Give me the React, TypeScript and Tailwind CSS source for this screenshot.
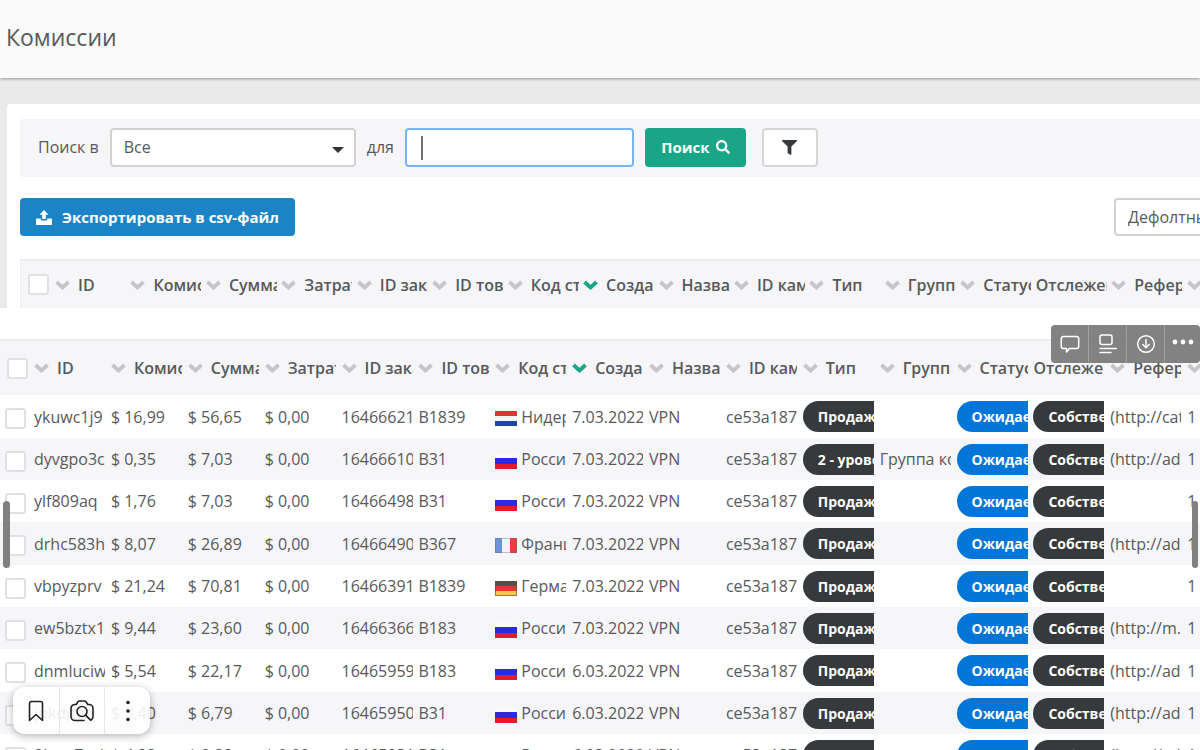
import { useState } from 'react';
import { FaFilter, FaSearch } from 'react-icons/fa';

type Country = 'nl' | 'ru' | 'fr' | 'de';

interface Commission {
  id: string;
  commission: string;
  total: string;
  order: string;
  product: string;
  country: Country;
  date: string;
  type: string;
  group?: string;
  referrer?: string;
}

const countryNames: Record<Country, string> = {
  nl: 'Нидерланды',
  ru: 'Россия',
  fr: 'Франция',
  de: 'Германия',
};

const columns = [
  'ID',
  'Комиссия',
  'Сумма',
  'Затраты',
  'ID заказа',
  'ID товара',
  'Код страны',
  'Создано',
  'Название',
  'ID кампании',
  'Тип',
  'Группа',
  'Статус',
  'Отслежено',
  'Реферер',
  '',
];

const rows: Commission[] = [
  { id: 'ykuwc1j9', commission: '16,99', total: '56,65', order: '16466621', product: 'B1839', country: 'nl', date: '7.03.2022', type: 'Продажа', referrer: '(http://catalog' },
  { id: 'dyvgpo3c', commission: '0,35', total: '7,03', order: '16466610', product: 'B31', country: 'ru', date: '7.03.2022', type: '2 - уровень', group: 'Группа комиссий', referrer: '(http://ad' },
  { id: 'ylf809aq', commission: '1,76', total: '7,03', order: '16466498', product: 'B31', country: 'ru', date: '7.03.2022', type: 'Продажа' },
  { id: 'drhc583h', commission: '8,07', total: '26,89', order: '16466490', product: 'B367', country: 'fr', date: '7.03.2022', type: 'Продажа', referrer: '(http://ad' },
  { id: 'vbpyzprv', commission: '21,24', total: '70,81', order: '16466391', product: 'B1839', country: 'de', date: '7.03.2022', type: 'Продажа' },
  { id: 'ew5bztx1', commission: '9,44', total: '23,60', order: '16466366', product: 'B183', country: 'ru', date: '7.03.2022', type: 'Продажа', referrer: '(http://m.' },
  { id: 'dnmluciw', commission: '5,54', total: '22,17', order: '16465959', product: 'B183', country: 'ru', date: '6.03.2022', type: 'Продажа', referrer: '(http://ad' },
  { id: 'jnkdjtye', commission: '3,40', total: '6,79', order: '16465950', product: 'B31', country: 'ru', date: '6.03.2022', type: 'Продажа', referrer: '(http://ad' },
  { id: '9haw7rqil', commission: '4,88', total: '9,88', order: '16465931', product: 'B31', country: 'ru', date: '6.03.2022', type: 'Продажа', referrer: '(http://ad' },
];

function Chevron({ active }: { active: boolean }) {
  return (
    <svg width="15" height="10" viewBox="0 0 15 10" className={active ? 'shrink-0 text-[#1aa587]' : 'shrink-0 text-[#c6c6c8]'}>
      <path d="M1.500 2 7.500 7.500l6-5.500" fill="none" stroke="currentColor" strokeWidth="3.800" />
    </svg>
  );
}

function UploadIcon() {
  return (
    <svg width="16" height="15" viewBox="0 0 16 15" fill="currentColor">
      <path d="M8 0l4.500 4.800H9.800V9H6.200V4.800H3.500z" />
      <path d="M1 8.500h3.800v1.200c0 .500.300.800.800.800h4.800c.500 0 .800-.300.800-.800V8.500H15c.600 0 1 .400 1 1V14c0 .600-.400 1-1 1H1c-.600 0-1-.400-1-1V9.500c0-.600.400-1 1-1z" />
    </svg>
  );
}

function Flag({ country }: { country: Country }) {
  return (
    <svg width="22" height="15" viewBox="0 0 22 15" className="mt-1 shrink-0">
      {country === 'nl' && (
        <>
          <rect width="22" height="5" fill="#e0342f" />
          <rect y="5" width="22" height="5" fill="#f4f6fa" />
          <rect y="10" width="22" height="5" fill="#1f479e" />
        </>
      )}
      {country === 'ru' && (
        <>
          <rect width="22" height="5" fill="#fafafa" />
          <rect y="4" width="22" height="7" fill="#2a2ae0" />
          <rect y="10" width="22" height="5" fill="#e31b2b" />
        </>
      )}
      {country === 'fr' && (
        <>
          <rect width="22" height="15" fill="#f4f4f6" />
          <rect width="7" height="15" fill="#6f94d6" />
          <rect x="15" width="7" height="15" fill="#ee3b3b" />
          <rect x="0.5" y="0.5" width="21" height="14" fill="none" stroke="#6b6b8a" strokeOpacity="0.4" />
        </>
      )}
      {country === 'de' && (
        <>
          <rect width="22" height="5" fill="#55504a" />
          <rect y="5" width="22" height="5" fill="#dd3a35" />
          <rect y="10" width="22" height="5" fill="#f6c94c" />
          <rect x="0.5" y="0.5" width="21" height="14" fill="none" stroke="#5b4a30" strokeOpacity="0.6" />
        </>
      )}
    </svg>
  );
}

function Checkbox({ label }: { label: string }) {
  return (
    <input
      type="checkbox"
      aria-label={label}
      className="block size-[21px] appearance-none rounded-[3px] border-2 border-[#e1e1e3] bg-white checked:bg-[#1aa587]"
    />
  );
}

function HeaderRow({ sorted, onSort }: { sorted: string; onSort: (name: string) => void }) {
  return (
    <tr>
      <th className="p-0 pl-[7px]">
        <Checkbox label="Выбрать все" />
      </th>
      {columns.map((name, i) => (
        <th key={i} className="p-0 text-left font-semibold">
          <button
            type="button"
            aria-label={name || 'Уровень'}
            onClick={() => onSort(name)}
            className="flex w-[71px] items-center gap-2 overflow-hidden whitespace-nowrap"
          >
            {name !== 'Отслежено' && <Chevron active={name === sorted} />}
            {name}
          </button>
        </th>
      ))}
    </tr>
  );
}

function Pill({ text, blue }: { text: string; blue?: boolean }) {
  return (
    <span
      className={`block h-[31px] w-max rounded-full px-[15px] text-sm leading-[31px] font-bold text-white ${
        blue ? 'bg-[#0275d8]' : 'bg-[#373a3c]'
      }`}
    >
      {text}
    </span>
  );
}

function Cell({ children }: { children?: React.ReactNode }) {
  return (
    <td className="p-0">
      <div className="w-[71px] overflow-hidden whitespace-nowrap">{children}</div>
    </td>
  );
}

export default function App() {
  const [sorted, setSorted] = useState('Создано');
  const [query, setQuery] = useState('');

  return (
    <div className="relative h-screen overflow-hidden bg-white font-['Open_Sans',sans-serif] text-base text-[#58595b]">
      <header className="relative flex h-[78px] items-center bg-[#fafafa] px-1.5 pb-1 shadow-[0_1px_3px_rgba(0,0,0,0.35)]">
        <h1 className="text-[23px] leading-7">Комиссии</h1>
      </header>

      <section className="bg-[#eaeaea] pt-[26px] pl-[7px]">
        <div className="rounded-tl-sm bg-white pt-[15px] pl-[13px]">
          <form onSubmit={(e) => e.preventDefault()} className="flex h-[58px] items-center bg-[#f6f6f9] pb-0.5 pl-[18px]">
            <label htmlFor="field">Поиск в</label>
            <div className="relative ml-[11px]">
              <select
                id="field"
                className="block h-[39px] w-[246px] appearance-none rounded border-2 border-[#d2d2d2] bg-white px-3 text-base"
              >
                <option>Все</option>
              </select>
              <svg width="12" height="6" viewBox="0 0 12 6" className="pointer-events-none absolute top-[19px] right-3">
                <path d="M0 0h12L6 6z" fill="#333" />
              </svg>
            </div>
            <label htmlFor="query" className="ml-[11px]">
              для
            </label>
            <div className="relative ml-[11px]">
              <input
                id="query"
                type="text"
                value={query}
                onChange={(e) => setQuery(e.target.value)}
                className="block h-[39px] w-[229px] rounded border-2 border-[#76b5ee] bg-white px-3.5 outline-none"
              />
              <span className="absolute top-2 left-4 h-6 w-0.5 bg-[#6c6f73]" />
            </div>
            <button
              type="submit"
              className="ml-[11px] flex h-[39px] w-[101px] items-center justify-center gap-1.5 rounded bg-[#1aa587] text-[15px] font-bold text-white"
            >
              Поиск <FaSearch size={14} />
            </button>
            <button
              type="button"
              aria-label="Фильтр"
              className="ml-4 flex h-[39px] w-14 items-center justify-center rounded border-2 border-[#d6d6d6] bg-white text-[#373a3c]"
            >
              <FaFilter size={15} />
            </button>
          </form>

          <div className="mt-[21px] flex items-center justify-between">
            <button
              type="button"
              className="flex h-[38px] w-[275px] items-center justify-center gap-2.5 rounded bg-[#1c84c6] text-[15px] font-bold text-white"
            >
              <UploadIcon />
              Экспортировать в csv-файл
            </button>
            <select
              aria-label="Вид"
              className="-mr-20 block h-[38px] w-[166px] appearance-none rounded border-2 border-[#d2d2d2] bg-white px-3 text-base"
            >
              <option>Дефолтный вид</option>
            </select>
          </div>

          <div className="mt-[23px] overflow-hidden border-t-2 border-l border-[#ededef] bg-[#f6f6f9]">
            <table className="h-[47px] w-[calc(100%+62px)] table-fixed border-collapse">
              <colgroup>
                <col className="w-[34px]" />
                <col span={16} />
              </colgroup>
              <thead>
                <HeaderRow sorted={sorted} onSort={setSorted} />
              </thead>
            </table>
          </div>
        </div>
      </section>

      <section className="mt-[31px] overflow-hidden border-t-2 border-[#ededef]">
        <table className="w-[calc(100%+64px)] table-fixed border-collapse">
          <colgroup>
            <col className="w-[34px]" />
            <col span={16} />
          </colgroup>
          <thead className="h-[54px] bg-[#f6f6f9]">
            <HeaderRow sorted={sorted} onSort={setSorted} />
          </thead>
          <tbody>
            {rows.map((row) => (
              <tr key={row.id} className="h-[42px] nth-[3n+1]:h-[43px] even:bg-[#f6f6f9]">
                <td className="p-0 pt-1 pl-[5px]">
                  <Checkbox label={row.id} />
                </td>
                <Cell>{row.id}</Cell>
                <Cell>$ {row.commission}</Cell>
                <Cell>$ {row.total}</Cell>
                <Cell>$ 0,00</Cell>
                <Cell>{row.order}</Cell>
                <Cell>{row.product}</Cell>
                <Cell>
                  <span className="flex items-center gap-1">
                    <Flag country={row.country} />
                    {countryNames[row.country]}
                  </span>
                </Cell>
                <Cell>{row.date}</Cell>
                <Cell>VPN</Cell>
                <Cell>ce53a187</Cell>
                <Cell>
                  <Pill text={row.type} />
                </Cell>
                <Cell>{row.group}</Cell>
                <Cell>
                  <Pill text="Ожидает" blue />
                </Cell>
                <Cell>
                  <Pill text="Собственный" />
                </Cell>
                <Cell>{row.referrer}</Cell>
                <Cell>1</Cell>
              </tr>
            ))}
          </tbody>
        </table>
      </section>

      <div className="absolute top-[501px] left-[3px] h-[67px] w-[7px] rounded-full bg-[#808080]" />
      <div className="absolute top-[501px] right-0.5 h-[67px] w-[6px] rounded-full bg-[#808080]" />

      {/* image actions */}
      <div className="absolute top-[325px] right-0 flex h-[38px] divide-x divide-[#a0a0a0] rounded bg-[#7b7b7b]/95 text-white">
        <button type="button" aria-label="Комментарий" className="flex w-[38px] items-center justify-center">
          <svg width="20" height="20" viewBox="0 0 20 20" fill="none" stroke="currentColor" strokeWidth="1.5" strokeLinejoin="round">
            <path d="M3.500 2.500h13a2.200 2.200 0 0 1 2.200 2.200v7.600a2.200 2.200 0 0 1-2.200 2.200H9.500L6.500 18v-3.500h-3a2.200 2.200 0 0 1-2.200-2.200V4.700a2.200 2.200 0 0 1 2.200-2.200z" />
          </svg>
        </button>
        <button type="button" aria-label="Описание" className="flex w-[38px] items-center justify-center">
          <svg width="20" height="20" viewBox="0 0 20 20" fill="none" stroke="currentColor" strokeWidth="1.5" strokeLinecap="round">
            <rect x="2" y="1" width="12" height="9.500" rx="2" />
            <path d="M2 14.500h16.500M2 18.500h11" />
          </svg>
        </button>
        <button type="button" aria-label="Скачать" className="flex w-[38px] items-center justify-center">
          <svg width="20" height="20" viewBox="0 0 20 20" fill="none" stroke="currentColor" strokeWidth="1.5" strokeLinecap="round" strokeLinejoin="round">
            <circle cx="10" cy="10" r="8.300" />
            <path d="M10 5.500v8M6.800 10.500 10 13.700l3.200-3.200" />
          </svg>
        </button>
        <button type="button" aria-label="Ещё" className="flex w-[35px] items-center justify-center pb-1">
          <svg width="22" height="6" viewBox="0 0 22 6" fill="currentColor">
            <circle cx="3" cy="3" r="2.400" />
            <circle cx="11" cy="3" r="2.400" />
            <circle cx="19" cy="3" r="2.400" />
          </svg>
        </button>
      </div>

      {/* bookmark / visual search */}
      <div className="absolute bottom-4 left-[13px] flex h-[47px] divide-x divide-[#e8e8ea] rounded-xl bg-white/90 text-[#222] shadow-[0_2px_8px_rgba(0,0,0,0.3)]">
        <button type="button" aria-label="Сохранить" className="flex w-[47px] items-center justify-center">
          <svg width="16" height="22" viewBox="0 0 16 22" fill="none" stroke="currentColor" strokeWidth="1.600" strokeLinejoin="round">
            <path d="M3.500 1.500h9a2 2 0 0 1 2 2V20.500L8 14.500l-6.500 6V3.500a2 2 0 0 1 2-2z" />
          </svg>
        </button>
        <button type="button" aria-label="Поиск по картинке" className="flex w-[45px] items-center justify-center">
          <svg width="26" height="24" viewBox="0 0 26 24" fill="none" stroke="currentColor" strokeWidth="1.600" strokeLinecap="round" strokeLinejoin="round">
            <path d="M15 21.500H6a4 4 0 0 1-4-4V9.500a4 4 0 0 1 4-4h1.200L9 2.800c.400-.600.900-.800 1.500-.800h5c.600 0 1.100.200 1.500.800l1.800 2.700H20a4 4 0 0 1 4 4v8c0 1.600-.900 2.900-2 3.500" />
            <circle cx="13" cy="12.500" r="5" />
            <path d="m16.600 16.100 5 5" />
          </svg>
        </button>
        <button type="button" aria-label="Меню" className="flex w-[45px] items-center justify-center">
          <svg width="4" height="22" viewBox="0 0 4 22" fill="currentColor">
            <circle cx="2" cy="2.500" r="1.800" />
            <circle cx="2" cy="11" r="1.800" />
            <circle cx="2" cy="19.500" r="1.800" />
          </svg>
        </button>
      </div>
    </div>
  );
}
